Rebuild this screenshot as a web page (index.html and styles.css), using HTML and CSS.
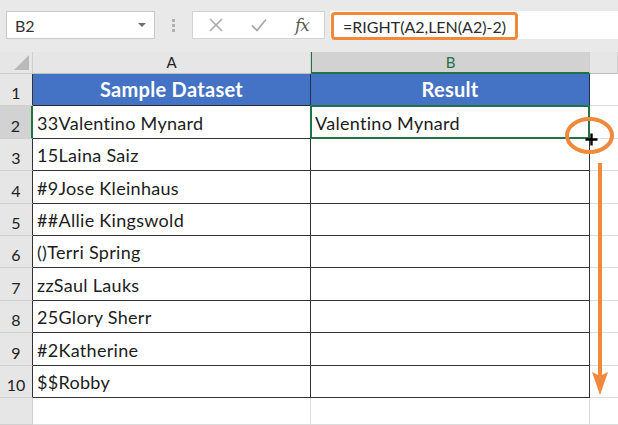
FILE: index.html
```html
<!DOCTYPE html>
<html>
<head>
<meta charset="utf-8">
<link rel="stylesheet" href="styles.css">
</head>
<body>
<div class="page">
  <div class="toolbar">
    <div class="namebox">
      <span class="nb-text">B2</span>
      <span class="nb-arrow"></span>
    </div>
    <div class="dots"><i></i><i></i><i></i></div>
    <div class="fxbox">
      <svg class="ic" width="16" height="16" viewBox="0 0 16 16"><path d="M2 2L14 14M14 2L2 14" stroke="#a9a9a9" stroke-width="1.6" fill="none"/></svg>
      <svg class="ic" width="18" height="16" viewBox="0 0 18 16"><path d="M2 8.5L7 13.5L16 2.5" stroke="#a9a9a9" stroke-width="1.8" fill="none"/></svg>
      <span class="fx">fx</span>
    </div>
    <div class="formula">
      <div class="hl">=RIGHT(A2,LEN(A2)-2)</div>
    </div>
  </div>
  <div class="sheet">
    <div class="corner"><span class="tri"></span></div>
    <div class="colh">A</div>
    <div class="colh sel">B</div>
    <div class="colh last"></div>

    <div class="rowh rt">1</div>
    <div class="c d blue">Sample Dataset</div>
    <div class="c d blue">Result</div>
    <div class="c e"></div>

    <div class="rowh rt rsel">2</div>
    <div class="c d">33Valentino Mynard</div>
    <div class="c d b2">Valentino Mynard</div>
    <div class="c e"></div>

    <div class="rowh rt">3</div>
    <div class="c d">15Laina Saiz</div>
    <div class="c d"></div>
    <div class="c e"></div>

    <div class="rowh rt">4</div>
    <div class="c d">#9Jose Kleinhaus</div>
    <div class="c d"></div>
    <div class="c e"></div>

    <div class="rowh rt">5</div>
    <div class="c d">##Allie Kingswold</div>
    <div class="c d"></div>
    <div class="c e"></div>

    <div class="rowh rt">6</div>
    <div class="c d">()Terri Spring</div>
    <div class="c d"></div>
    <div class="c e"></div>

    <div class="rowh rt">7</div>
    <div class="c d">zzSaul Lauks</div>
    <div class="c d"></div>
    <div class="c e"></div>

    <div class="rowh rt">8</div>
    <div class="c d">25Glory Sherr</div>
    <div class="c d"></div>
    <div class="c e"></div>

    <div class="rowh rt">9</div>
    <div class="c d">#2Katherine</div>
    <div class="c d"></div>
    <div class="c e"></div>

    <div class="rowh rt">10</div>
    <div class="c d">$$Robby</div>
    <div class="c d"></div>
    <div class="c e"></div>

    <div class="rowh"></div>
    <div class="c"></div>
    <div class="c"></div>
    <div class="c e"></div>
  </div>
  <svg class="annot" width="618" height="425" viewBox="0 0 618 425">
    <ellipse cx="589.5" cy="135.5" rx="22.5" ry="16.5" fill="none" stroke="#f0893b" stroke-width="4"/>
    <path d="M585.5 139.5H597.5M591.5 133.5V145.5" stroke="#000" stroke-width="2.4" fill="none"/>
    <path d="M600 163V378" stroke="#f0893b" stroke-width="4" fill="none"/>
    <path d="M592 372L600 376L608 372L600 395Z" fill="#f0893b"/>
  </svg>
</div>
</body>
</html>
```

FILE: styles.css
```css
html, body {
  margin: 0;
  padding: 0;
}
body {
  width: 618px;
  height: 425px;
  overflow: hidden;
  background: #ffffff;
  font-family: Lato, "Open Sans", "Liberation Sans", sans-serif;
}
.page {
  position: relative;
  width: 618px;
  height: 425px;
  background: #e9e9e9;
}
.toolbar {
  height: 52px;
  box-sizing: border-box;
  padding-top: 11px;
  display: flex;
  align-items: flex-start;
}
.namebox {
  margin-left: 6px;
  width: 149px;
  height: 28px;
  box-sizing: border-box;
  background: #fff;
  border: 1px solid #c9c9c9;
  display: flex;
  align-items: center;
  justify-content: space-between;
  padding: 0 8px 0 8px;
}
.nb-text {
  font-size: 16px;
  color: #333;
}
.nb-arrow {
  width: 0;
  height: 0;
  border-left: 4px solid transparent;
  border-right: 4px solid transparent;
  border-top: 4px solid #6e6e6e;
}
.dots {
  width: 37px;
  height: 28px;
  display: flex;
  flex-direction: column;
  align-items: center;
  justify-content: center;
  gap: 2px;
}
.dots i {
  display: block;
  width: 3px;
  height: 3px;
  background: #b0b0b0;
}
.fxbox {
  width: 133px;
  height: 28px;
  box-sizing: border-box;
  background: #fff;
  border: 1px solid #d3d3d3;
  display: flex;
  align-items: center;
  padding-left: 15px;
}
.fxbox .ic:first-child {
  margin-right: 26px;
}
.fxbox .ic:nth-child(2) {
  margin-right: 27px;
}
.fx {
  font-family: "DejaVu Serif", "Liberation Serif", serif;
  font-style: italic;
  font-size: 17px;
  color: #5a5a5a;
  letter-spacing: -1px;
}
.formula {
  margin-left: 5px;
  flex: 1;
  height: 28px;
  background: #fff;
  display: flex;
}
.hl {
  margin-left: 1px;
  margin-top: 1px;
  width: 187px;
  height: 28px;
  box-sizing: border-box;
  border: 3px solid #f0893b;
  border-radius: 4px;
  font-size: 16px;
  color: #2b2b2b;
  padding-left: 9px;
  display: flex;
  align-items: center;
}
.sheet {
  display: grid;
  grid-template-columns: 33px 278px 279px 1fr;
  grid-template-rows: 22px repeat(10, 32.4px) 1fr;
  height: 373px;
  background: #fff;
}
.sheet > div {
  box-sizing: border-box;
}
.corner {
  background: #e6e6e6;
  border-right: 1px solid #cfcfcf;
  border-bottom: 1px solid #cfcfcf;
  position: relative;
}
.tri {
  position: absolute;
  right: 3px;
  bottom: 3px;
  width: 0;
  height: 0;
  border-left: 15px solid transparent;
  border-bottom: 15px solid #b9b9b9;
}
.colh {
  background: #e6e6e6;
  border-right: 1px solid #cfcfcf;
  border-bottom: 1px solid #bdbdbd;
  display: flex;
  align-items: flex-end;
  justify-content: center;
  padding-bottom: 2px;
  font-size: 15px;
  color: #222;
}
.colh.sel {
  background: #d2d2d2;
  color: #217346;
  border-left: 1px solid #217346;
  border-bottom: 2px solid #217346;
  padding-bottom: 1px;
}
.colh.last {
  background: #e6e6e6;
}
.rowh {
  background: #e6e6e6;
  border-bottom: 1px solid #d0d0d0;
  border-right: 1px solid #cfcfcf;
  display: flex;
  align-items: flex-end;
  justify-content: center;
  padding-bottom: 3px;
  font-size: 16px;
  color: #222;
}
.rowh.rt {
  border-right: 1px solid #333;
}
.rowh.rsel {
  background: #d2d2d2;
  border-right: 2px solid #217346;
}
.c {
  border-right: 1px solid #dcdcdc;
  border-bottom: 1px solid #dcdcdc;
  display: flex;
  align-items: flex-end;
  padding: 0 0 4px 4px;
  font-size: 18px;
  letter-spacing: 0.3px;
  color: #1c1c1c;
  white-space: nowrap;
}
.c.d {
  border-right: 1px solid #333;
  border-bottom: 1px solid #333;
}
.c.blue {
  background: #4472c4;
  color: #fff;
  font-weight: bold;
  font-size: 20px;
  letter-spacing: 0.3px;
  justify-content: center;
  padding: 0 0 4px 0;
  border-right: 1px solid #1f2f55;
  border-bottom: 1px solid #2a2a2a;
}
.c.e {
  border-right: none;
}
.b2 {
  position: relative;
}
.b2::after {
  content: "";
  position: absolute;
  left: -1px;
  top: -1px;
  right: -1px;
  bottom: -1px;
  border: 2px solid #217346;
}
.annot {
  position: absolute;
  left: 0;
  top: 0;
  pointer-events: none;
}
```
